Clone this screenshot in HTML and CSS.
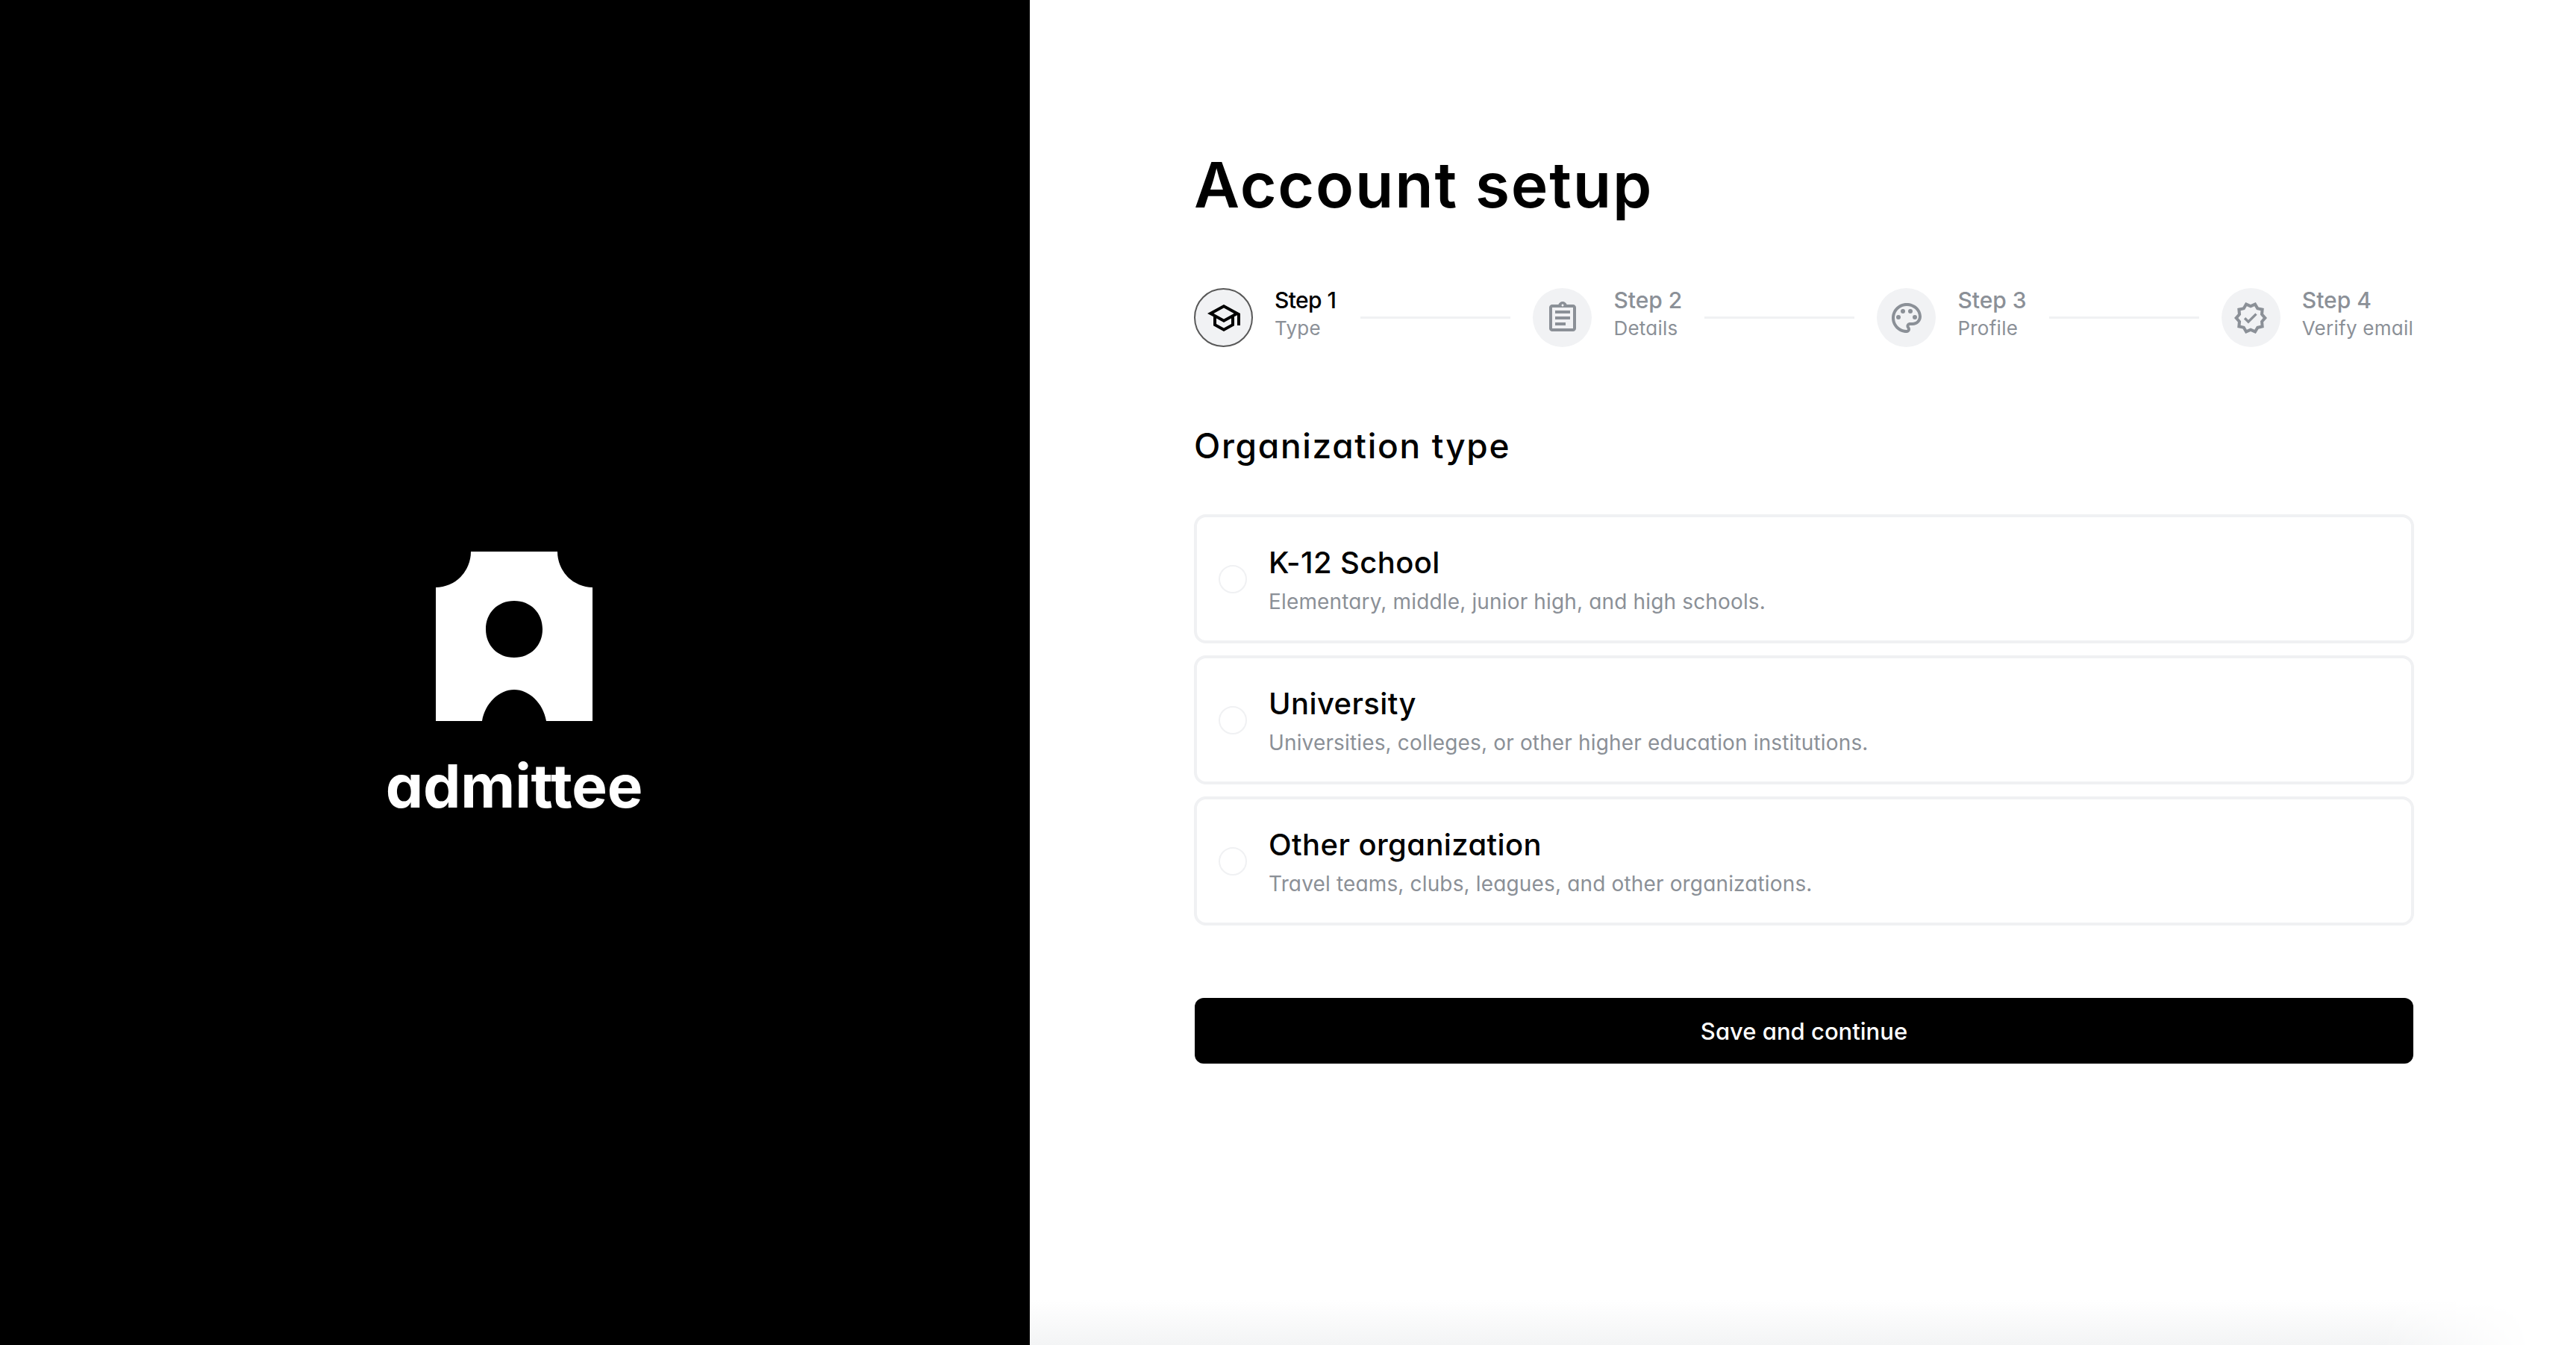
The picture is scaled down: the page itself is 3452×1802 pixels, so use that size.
FILE: index.html
```html
<!DOCTYPE html>
<html lang="en">
<head>
<meta charset="utf-8">
<title>Account setup</title>
<link rel="stylesheet" href="styles.css">
</head>
<body>
<div class="page">
  <aside class="brand">
    <svg class="brand-mark" viewBox="0 0 210 227" aria-hidden="true">
      <path fill-rule="evenodd" d="M47 0H163A47 48 0 0 0 210 48V227H148C144 203 125 185 105 185C85 185 66 203 62 227H0V48A47 48 0 0 0 47 0ZM105 66C127 66 143 82 143 104C143 126 127 142 105 142C83 142 67 126 67 104C67 82 83 66 105 66Z"/>
    </svg>
    <div class="brand-name">admittee</div>
  </aside>
  <main class="setup">
    <h1 class="title">Account setup</h1>
    <ol class="steps">
      <li class="step step-active">
        <span class="step-icon"><svg viewBox="0 0 24 24"><path d="M12 3 1 9l4 2.18v6L12 21l7-3.82v-6l2-1.09V17h2V9L12 3zm6.82 6L12 12.72 5.18 9 12 5.28 18.82 9zM17 15.99l-5 2.73-5-2.73v-3.72L12 15l5-2.73v3.72z"/></svg></span>
        <span class="step-text"><b>Step 1</b><small>Type</small></span>
      </li>
      <li class="step-line"></li>
      <li class="step">
        <span class="step-icon"><svg viewBox="0 0 24 24"><path d="M7 7h10v2H7zm0 4h10v2H7zm0 4h7v2H7zM19 3h-4.18C14.4 1.84 13.3 1 12 1c-1.3 0-2.4.84-2.82 2H5c-.14 0-.27.01-.4.04-.39.08-.74.28-1.01.55-.18.18-.33.4-.43.64-.1.23-.16.49-.16.77v14c0 .27.06.54.16.78s.25.45.43.64c.27.27.62.47 1.01.55.13.02.26.03.4.03h14c1.1 0 2-.9 2-2V5c0-1.1-.9-2-2-2zm-7-.25c.41 0 .75.34.75.75s-.34.75-.75.75-.75-.34-.75-.75.34-.75.75-.75zM19 19H5V5h14v14z"/></svg></span>
        <span class="step-text"><b>Step 2</b><small>Details</small></span>
      </li>
      <li class="step-line"></li>
      <li class="step">
        <span class="step-icon"><svg viewBox="0 0 24 24"><path d="M12 22C6.49 22 2 17.51 2 12S6.49 2 12 2s10 4.04 10 9c0 3.31-2.69 6-6 6h-1.77c-.28 0-.5.22-.5.5 0 .12.05.23.13.33.41.47.64 1.06.64 1.67 0 1.38-1.12 2.5-2.5 2.5zm0-18c-4.41 0-8 3.59-8 8s3.59 8 8 8c.28 0 .5-.22.5-.5 0-.16-.08-.28-.14-.35-.41-.46-.63-1.05-.63-1.65 0-1.38 1.12-2.5 2.5-2.5H16c2.21 0 4-1.79 4-4 0-3.86-3.59-7-8-7z"/><circle cx="6.5" cy="11.5" r="1.5"/><circle cx="9.5" cy="7.5" r="1.5"/><circle cx="14.5" cy="7.5" r="1.5"/><circle cx="17.5" cy="11.5" r="1.5"/></svg></span>
        <span class="step-text"><b>Step 3</b><small>Profile</small></span>
      </li>
      <li class="step-line"></li>
      <li class="step">
        <span class="step-icon"><svg viewBox="0 0 24 24"><path fill-rule="evenodd" d="M23 12l-2.44-2.79.34-3.69-3.61-.82-1.89-3.2L12 2.96 8.6 1.5 6.71 4.69 3.1 5.5l.34 3.7L1 12l2.44 2.79-.34 3.7 3.61.82 1.89 3.2L12 21.04l3.4 1.47 1.89-3.19 3.61-.82-.34-3.69L23 12zM20.34 12l-1.84 2.1.25 2.78-2.72.62-1.42 2.4L12 18.8l-2.56 1.1-1.42-2.4-2.72-.62.25-2.78L3.66 12l1.89-2.1-.25-2.78 2.72-.62L9.44 4.1 12 5.2l2.56-1.1 1.42 2.4 2.72.62-.25 2.78L20.34 12z"/><path d="M10.09 16.72l-3.8-3.81 1.48-1.48 2.32 2.33 5.85-5.87 1.48 1.48-7.33 7.35z" transform="translate(2.4 2.4) scale(.8)"/></svg></span>
        <span class="step-text"><b>Step 4</b><small>Verify email</small></span>
      </li>
    </ol>
    <h2 class="section-title">Organization type</h2>
    <div class="options">
      <label class="option">
        <span class="radio"></span>
        <span class="option-text"><strong>K-12 School</strong><span class="option-desc">Elementary, middle, junior high, and high schools.</span></span>
      </label>
      <label class="option">
        <span class="radio"></span>
        <span class="option-text"><strong>University</strong><span class="option-desc">Universities, colleges, or other higher education institutions.</span></span>
      </label>
      <label class="option">
        <span class="radio"></span>
        <span class="option-text"><strong>Other organization</strong><span class="option-desc">Travel teams, clubs, leagues, and other organizations.</span></span>
      </label>
    </div>
    <button class="submit" type="button">Save and continue</button>
  </main>
</div>
<div class="bottom-fade"></div>
</body>
</html>
```
FILE: styles.css
```css
* { box-sizing: border-box; }
html, body { margin: 0; height: 100%; }
body {
  position: relative;
  overflow: hidden;
  background: #fff;
  color: #000;
  font-family: Inter, "Liberation Sans", sans-serif;
  font-feature-settings: "cv11" 1;
}
.page { display: flex; height: 1802px; }

.brand {
  flex: 0 0 1380px;
  background: #000;
  display: flex;
  flex-direction: column;
  align-items: center;
  padding: 739px 2px 0 0;
}
.brand-mark { width: 210px; height: 227px; fill: #fff; display: block; }
.brand-name {
  margin-top: 37px;
  color: #fff;
  font-size: 80px;
  line-height: 100px;
  font-weight: 700;
  letter-spacing: -0.2px;
}

.setup {
  flex: 1;
  padding: 198px 217px 0 220px;
  display: flex;
  flex-direction: column;
}
.title {
  margin: 0;
  font-size: 84px;
  line-height: 100px;
  font-weight: 600;
  letter-spacing: 1.8px;
}

.steps {
  list-style: none;
  margin: 88px 1px 0 0;
  padding: 0;
  display: flex;
  align-items: center;
  gap: 30px;
}
.step { display: flex; align-items: center; gap: 29px; flex: none; }
.step-line { flex: 1; height: 3px; background: #f0f1f3; }
.step-icon {
  width: 79px;
  height: 79px;
  border-radius: 50%;
  background: #f1f2f4;
  display: flex;
  align-items: center;
  justify-content: center;
  flex: none;
}
.step-icon svg { width: 48px; height: 48px; fill: #8b9097; display: block; }
.step-active .step-icon { border: 2px solid #585858; }
.step-active .step-icon svg { fill: #000; }
.step-text { display: flex; flex-direction: column; margin-top: -11px; }
.step-active .step-text { padding-right: 3px; }
.step-text b {
  font-size: 30px;
  line-height: 38px;
  font-weight: 500;
  color: #8b9097;
}
.step-active .step-text b { color: #000; letter-spacing: -0.6px; }
.step-text small {
  margin-top: 1px;
  font-size: 26px;
  line-height: 36px;
  font-weight: 400;
  letter-spacing: 0.25px;
  color: #8b9097;
}

.section-title {
  margin: 104px 0 0;
  font-size: 46px;
  line-height: 56px;
  font-weight: 500;
  letter-spacing: 1.7px;
}

.options { margin-top: 64px; display: flex; flex-direction: column; gap: 16px; }
.option {
  height: 173px;
  border: 4px solid #f0f1f3;
  border-radius: 16px;
  padding: 0 29px;
  display: flex;
  align-items: center;
  gap: 29px;
}
.radio {
  width: 38px;
  height: 38px;
  border: 2px solid #f0f1f3;
  border-radius: 50%;
  flex: none;
}
.option-text { display: flex; flex-direction: column; margin-top: 3px; }
.option-text strong { font-size: 40px; line-height: 52px; font-weight: 500; letter-spacing: 0.4px; }
.option-desc { margin-top: 6px; font-size: 28px; line-height: 40px; letter-spacing: 0.15px; color: #8b9097; }

.submit {
  margin: 97px 1px 0;
  height: 88px;
  border: 0;
  border-radius: 12px;
  background: #000;
  color: #fff;
  font: inherit;
  font-size: 31px;
  font-weight: 500;
}

.bottom-fade {
  position: absolute;
  left: 1380px;
  right: 60px;
  bottom: 0;
  height: 60px;
  background: linear-gradient(to top, #f3f4f5, #fff);
  -webkit-mask-image: linear-gradient(to right, #000 90%, transparent);
  mask-image: linear-gradient(to right, #000 90%, transparent);
}
```
